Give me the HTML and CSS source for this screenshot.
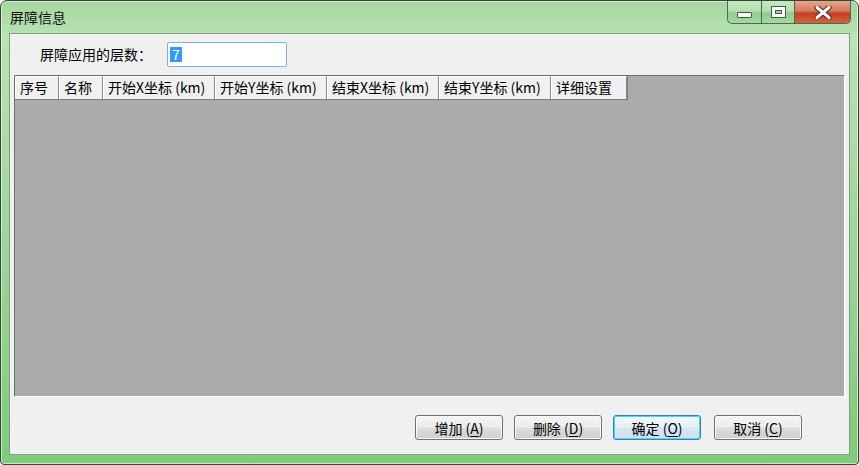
FILE: index.html
```html
<!DOCTYPE html>
<html>
<head>
<meta charset="utf-8">
<link rel="stylesheet" href="styles.css">
</head>
<body>
<div class="window">
  <div class="titlebar">
    <div class="title">屏障信息</div>
    <div class="controls">
      <div class="ctl ctl-min"><span class="min-glyph"></span></div>
      <div class="ctl ctl-max"><span class="max-glyph"></span></div>
      <div class="ctl ctl-close">
        <svg width="18" height="13" viewBox="0 0 18 13">
          <path d="M3 1.5 L15 11.5 M15 1.5 L3 11.5" stroke="#4a2418" stroke-width="5" stroke-linecap="round"/>
          <path d="M3 1.5 L15 11.5 M15 1.5 L3 11.5" stroke="#ffffff" stroke-width="3" stroke-linecap="round"/>
        </svg>
      </div>
    </div>
  </div>
  <div class="client">
    <div class="field-row">
      <span class="label">屏障应用的层数：</span>
      <div class="input"><span class="sel">7</span></div>
    </div>
    <div class="grid">
      <div class="header">
        <div class="hcell w44">序号</div>
        <div class="hcell w44">名称</div>
        <div class="hcell w112">开始X坐标 (km)</div>
        <div class="hcell w112">开始Y坐标 (km)</div>
        <div class="hcell w112">结束X坐标 (km)</div>
        <div class="hcell w112">结束Y坐标 (km)</div>
        <div class="hcell w76">详细设置</div>
      </div>
    </div>
    <div class="buttons">
      <div class="btn">增加 (<u>A</u>)</div>
      <div class="btn">删除 (<u>D</u>)</div>
      <div class="btn btn-default">确定 (<u>O</u>)</div>
      <div class="btn">取消 (<u>C</u>)</div>
    </div>
  </div>
</div>
</body>
</html>
```
FILE: styles.css
```css
* { box-sizing: border-box; }
html, body { margin: 0; padding: 0; }
body {
  width: 859px;
  height: 465px;
  overflow: hidden;
  font-family: "Noto Sans CJK SC", "Noto Sans", sans-serif;
  font-size: 14px;
  color: #000;
  background: #ffffff;
}
.window {
  width: 859px;
  height: 465px;
  border: 1px solid #2f4a33;
  border-radius: 7px 7px 4px 4px;
  background: linear-gradient(180deg, #a6d6a1 0%, #b9e4b4 8%, #a4d99f 40%, #80ca7c 100%);
  display: flex;
  flex-direction: column;
  padding: 0 8px 9px 8px;
  box-shadow: inset 0 0 0 1px rgba(255,255,255,0.55);
}
.titlebar {
  height: 32px;
  display: flex;
  align-items: flex-start;
  justify-content: space-between;
}
.title {
  font-size: 14px;
  line-height: 16px;
  padding-top: 8px;
  padding-left: 1px;
  color: #111;
}
.controls {
  display: flex;
  margin-right: -1px;
}
.ctl {
  height: 23px;
  display: flex;
  align-items: center;
  justify-content: center;
  border: 1px solid #4d6a50;
  border-top: none;
}
.ctl-min {
  width: 34px;
  border-radius: 0 0 0 5px;
  border-right: none;
  background: linear-gradient(180deg, #c7e8c3 0%, #b3dfae 45%, #8fcc8a 55%, #a5d9a0 100%);
}
.ctl-max {
  width: 33px;
  border-right: none;
  background: linear-gradient(180deg, #c7e8c3 0%, #b3dfae 45%, #8fcc8a 55%, #a5d9a0 100%);
}
.ctl-close {
  width: 57px;
  border-radius: 0 0 5px 0;
  background: linear-gradient(180deg, #e8a58d 0%, #d7795c 45%, #c2401f 55%, #d4623c 100%);
}
.min-glyph {
  width: 15px;
  height: 6px;
  margin-top: 6px;
  background: #ffffff;
  border: 1px solid #44594a;
  border-radius: 1px;
}
.max-glyph {
  width: 13px;
  height: 10px;
  border: 3px solid #ffffff;
  outline: 1px solid #44594a;
  box-shadow: inset 0 0 0 1px #44594a;
}
.client {
  flex: 1;
  border: 1px solid #7f9d82;
  background: #f0f0f0;
  display: flex;
  flex-direction: column;
  padding: 8px 4px 14px 4px;
}
.field-row {
  display: flex;
  align-items: center;
  height: 24px;
  padding-left: 26px;
}
.label {
  width: 127px;
  font-size: 14px;
  line-height: 16px;
}
.input {
  width: 120px;
  height: 25px;
  border: 1px solid #7ab0e3;
  border-radius: 2px;
  background: #ffffff;
  display: flex;
  align-items: center;
  padding-left: 2px;
}
.sel {
  background: #3399ff;
  color: #ffffff;
  font-size: 14px;
  line-height: 15px;
  padding: 0 2px;
}
.grid {
  flex: 1;
  margin-top: 9px;
  background: #ababab;
  border-top: 1px solid #6f6f6f;
  border-left: 1px solid #6f6f6f;
  border-bottom: 1px solid #ffffff;
  border-right: 1px solid #ffffff;
}
.header {
  display: flex;
  height: 24px;
  width: fit-content;
  border-bottom: 1px solid #7a7a7a;
  border-right: 1px solid #7a7a7a;
}
.hcell {
  height: 23px;
  background: #f0f0f0;
  border-right: 1px solid #8a8a8a;
  border-top: 1px solid #ffffff;
  border-left: 1px solid #ffffff;
  padding-left: 4px;
  font-size: 14px;
  line-height: 20px;
  white-space: nowrap;
  overflow: hidden;
}
.w44 { width: 44px; }
.w112 { width: 112px; }
.w76 { width: 76px; }
.buttons {
  display: flex;
  justify-content: flex-end;
  gap: 11px;
  margin-top: 18px;
  padding-right: 43px;
}
.btn {
  width: 88px;
  height: 25px;
  border: 1px solid #707070;
  border-radius: 3px;
  background: linear-gradient(180deg, #f4f4f4 0%, #ececec 48%, #dddddd 52%, #d0d0d0 100%);
  box-shadow: inset 0 0 0 1px #fbfbfb;
  display: flex;
  align-items: center;
  justify-content: center;
  font-size: 14px;
  line-height: 16px;
}
.btn u { text-underline-offset: 2px; }
.btn-default {
  margin-right: 2px;
  border-color: #3c7fb1;
  box-shadow: inset 0 0 0 1px #48d7fb;
  background: linear-gradient(180deg, #f2f8fc 0%, #e6f0f8 48%, #d8e6f1 52%, #cddfee 100%);
}
```
